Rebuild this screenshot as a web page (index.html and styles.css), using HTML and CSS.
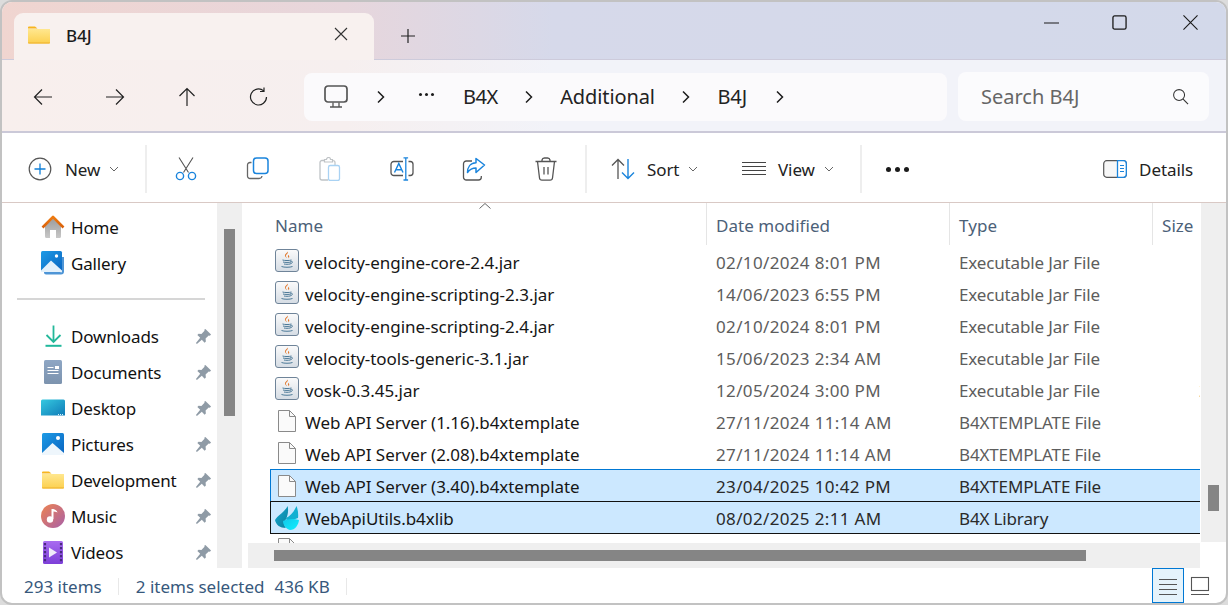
FILE: index.html
```html
<!DOCTYPE html>
<html lang="en">
<head>
<meta charset="utf-8">
<title>B4J</title>
<link rel="stylesheet" href="styles.css">
</head>
<body>
<svg class="defs" aria-hidden="true">
  <defs>
    <linearGradient id="gFolder" x1="0" y1="0" x2="0" y2="1"><stop offset="0" stop-color="#ffe78f"/><stop offset="1" stop-color="#fcd04f"/></linearGradient>
    <linearGradient id="gRoof" x1="0" y1="0" x2="0" y2="1"><stop offset="0" stop-color="#ee7a10"/><stop offset="1" stop-color="#d9600a"/></linearGradient>
    <linearGradient id="gHouse" x1="0" y1="0" x2="0" y2="1"><stop offset="0" stop-color="#9c9c9c"/><stop offset="1" stop-color="#c8c8c8"/></linearGradient>
    <linearGradient id="gBlue" x1="0" y1="0" x2="1" y2="1"><stop offset="0" stop-color="#1d9be6"/><stop offset="1" stop-color="#0a64c0"/></linearGradient>
    <linearGradient id="gDoc" x1="0" y1="0" x2="0" y2="1"><stop offset="0" stop-color="#8ea6c4"/><stop offset="1" stop-color="#7c93ae"/></linearGradient>
    <linearGradient id="gDesk" x1="0" y1="0" x2="1" y2="1"><stop offset="0" stop-color="#35c9e0"/><stop offset="1" stop-color="#0f7bb8"/></linearGradient>
    <linearGradient id="gMusic" x1="0" y1="0" x2="1" y2="1"><stop offset="0" stop-color="#ee8350"/><stop offset="1" stop-color="#a860a8"/></linearGradient>
    <linearGradient id="gVideo" x1="0" y1="0" x2="0" y2="1"><stop offset="0" stop-color="#a86cf0"/><stop offset="1" stop-color="#7d3fd8"/></linearGradient>
    <linearGradient id="gJava" x1="0" y1="0" x2="0" y2="1"><stop offset="0" stop-color="#fbfbfb"/><stop offset="1" stop-color="#d5dce4"/></linearGradient>
    <linearGradient id="gFlame" x1="0" y1="0" x2="1" y2="1"><stop offset="0" stop-color="#12c8ea"/><stop offset="1" stop-color="#0ff0ff"/></linearGradient>
    <linearGradient id="gTeal" x1="0" y1="0" x2="1" y2="1"><stop offset="0" stop-color="#16a9cf"/><stop offset="1" stop-color="#0a7f9e"/></linearGradient>

    <symbol id="i-folder" viewBox="0 0 24 24">
      <path d="M1 4.500A1 1 0 0 1 2 3.500h6l2.500 2H1z" fill="#f7b51e"/>
      <path d="M1 6h22v13.500a1 1 0 0 1-1 1H2a1 1 0 0 1-1-1z" fill="url(#gFolder)"/>
      <path d="M1 19.500h22v.200a.8.800 0 0 1-.8.800H1.800a.8.800 0 0 1-.8-.8z" fill="#eeb02a"/>
    </symbol>
    <symbol id="i-home" viewBox="0 0 24 24">
      <path d="M4 11 12 3.500 20 11v10.500a1.500 1.500 0 0 1-1.500 1.500H15v-8H9v8H5.500A1.500 1.500 0 0 1 4 21.500z" fill="url(#gHouse)"/>
      <path d="M1.500 12.500 12 2l10.500 10.500" fill="none" stroke="url(#gRoof)" stroke-width="2.600" stroke-linejoin="round"/>
    </symbol>
    <symbol id="i-gallery" viewBox="0 0 24 24">
      <path d="M3 8v13.500a2 2 0 0 0 2 2h15a3 3 0 0 0 3-3V6h-2v14.500a1 1 0 0 1-1 1z" fill="#4e95d6"/>
      <rect x="0" y="0" width="21" height="21" rx="1.500" fill="url(#gBlue)"/>
      <path d="M0 19.500 10 9.500l11 10V21H0z" fill="#e4f1fb"/>
      <circle cx="15.500" cy="5" r="1.700" fill="#fff"/>
    </symbol>
    <symbol id="i-down" viewBox="0 0 24 24">
      <path d="M12.500 1.500v16M5.500 11l7 7 7-7" fill="none" stroke="#24b89a" stroke-width="1.800"/>
      <path d="M4.500 21.800h16" stroke="#20b89c" stroke-width="2"/>
    </symbol>
    <symbol id="i-docs" viewBox="0 0 24 24">
      <rect x="3" y="0" width="18" height="24" rx="1.500" fill="url(#gDoc)"/>
      <path d="M6.500 7.500h6M6.500 10.500h11M6.500 13.500h11" stroke="#fff" stroke-width="1.200"/>
      <rect x="14" y="6" width="4" height="3" fill="#fff"/>
    </symbol>
    <symbol id="i-desk" viewBox="0 0 24 24">
      <path d="M0 5a1.500 1.500 0 0 1 1.500-1.500h21A1.500 1.500 0 0 1 24 5v14.500H0z" fill="url(#gDesk)"/>
      <path d="M17 18.500h1M19 18.500h1M21 18.500h1" stroke="#d8f4fa" stroke-width="1"/>
    </symbol>
    <symbol id="i-pics" viewBox="0 0 24 24">
      <rect x="1" y="1" width="22" height="22" rx="1.500" fill="url(#gBlue)"/>
      <path d="M1 21 11.500 11 23 21v2H1z" fill="#eef6fc"/>
      <circle cx="17" cy="6" r="2" fill="#fff"/>
    </symbol>
    <symbol id="i-music" viewBox="0 0 24 24">
      <circle cx="12" cy="12" r="12" fill="url(#gMusic)"/>
      <path d="M11.500 5v10" stroke="#fff" stroke-width="2"/>
      <path d="M11.500 5c2 .3 4.500 1 5 3.500-1.500-.8-3.500-1-5-1z" fill="#fff"/>
      <circle cx="9" cy="15.500" r="3.200" fill="#fff"/>
    </symbol>
    <symbol id="i-video" viewBox="0 0 24 24">
      <rect x="2" y="1" width="20" height="23" rx="1.500" fill="url(#gVideo)"/>
      <path d="M4 3v19M20 3v19" stroke="#4a2a80" stroke-width="2.200" stroke-dasharray="2.200 1.800"/>
      <path d="M8 7.500v10l8-5z" fill="#f0ecfa"/>
    </symbol>
    <symbol id="i-pin" viewBox="0 0 18 18">
      <path d="M11 1 17 7l-1.300 1.200-1.200-.3-3.300 3.300.3 3-1.300 1.300-3-3L2 17l-1-1 4.500-5.700-3-3 1.300-1.300 3 .3 3.300-3.300-.3-1.200z" fill="#8f9ba6"/>
    </symbol>
    <symbol id="i-java" viewBox="0 0 24 24">
      <rect x=".5" y=".5" width="23" height="22" rx="2.500" fill="url(#gJava)" stroke="#6f8499"/>
      <path d="M12.500 2.500c1.500 2-2.500 3-1.500 5 .3.700 1 1.200 1 1.800-1.200-1-2.700-2-1.800-3.700.6-1.200 2.300-1.800 2.300-3.100zM14.500 5.500c-1.500.8-2 1.500-1.300 2.500.4.600.2 1-.3 1.500 1.800-1 1.500-1.900 1-2.700-.2-.5 0-.9.600-1.300z" fill="#e0762a"/>
      <path d="M7.500 11c2 .7 7 .7 9 0M8 13c2 .6 6 .6 8 0M9 15c1.500.4 4.500.4 6 0M6.500 17.500c2.500 1 8.500 1 11 0M15.500 12.500c2.500-.8 2.800 1.500-.5 2.500" fill="none" stroke="#4d7a98" stroke-width="1"/>
    </symbol>
    <symbol id="i-file" viewBox="0 0 24 24">
      <path d="M3.500 1.500h11l6 6v15h-17z" fill="#fafafa" stroke="#8a8a8a"/>
      <path d="M14.500 1.500v6h6" fill="none" stroke="#8a8a8a"/>
    </symbol>
    <symbol id="i-b4x" viewBox="0 0 24 24">
      <path d="M11 12c4-2 8-6 10.500-12 1.500 4 2 8 1.500 12l-11 4z" fill="#12b0d2"/>
      <path d="M0 14C3 9 8 8 12.700 0c.8 5 .3 9-1.700 13-2 4-2 7 0 9C5 22 1 19 0 14z" fill="url(#gTeal)"/>
      <path d="M8 15c4-2 10-3 16-1-.5 5-4 10-9 10-4-1-7-5-7-9z" fill="url(#gFlame)"/>
    </symbol>
    <symbol id="i-chev" viewBox="0 0 10 16">
      <path d="M2 2.500 7.500 8 2 13.500" fill="none" stroke="#1c1c1c" stroke-width="1.500"/>
    </symbol>
    <symbol id="i-drop" viewBox="0 0 10 6">
      <path d="M1 1l4 4 4-4" fill="none" stroke="#666" stroke-width="1"/>
    </symbol>
  </defs>
</svg>

<div class="window">
  <header class="titlebar">
    <div class="tab">
      <svg class="tab-folder"><use href="#i-folder"/></svg>
      <span class="tab-title">B4J</span>
      <svg class="tab-close" viewBox="0 0 14 14"><path d="M1 1l12 12M13 1 1 13" stroke="#333" stroke-width="1.100" fill="none"/></svg>
    </div>
    <svg class="tab-add" viewBox="0 0 14 14"><path d="M7 0v14M0 7h14" stroke="#222" stroke-width="1.200" fill="none"/></svg>
    <div class="caption">
      <span class="cap-btn cap-min"><svg class="cap-ic" viewBox="0 0 16 16"><path d="M0 8.500h16" stroke="#1a1a1a" stroke-width="1.100"/></svg></span>
      <span class="cap-btn"><svg class="cap-ic" viewBox="0 0 16 16"><rect x="1" y="1" width="14" height="14" rx="1.800" fill="none" stroke="#1a1a1a" stroke-width="1.400"/></svg></span>
      <span class="cap-btn"><svg class="cap-ic" viewBox="0 0 16 16"><path d="M.5.500l15 15M15.500.500l-15 15" stroke="#1a1a1a" stroke-width="1.200" fill="none"/></svg></span>
    </div>
  </header>

  <nav class="addressbar">
    <span class="nav-btn"><svg class="nav-ic" viewBox="0 0 20 20"><path d="M19 10H1.500M9 2.500 1.500 10 9 17.500" fill="none" stroke="#222" stroke-width="1.200"/></svg></span>
    <span class="nav-btn"><svg class="nav-ic" viewBox="0 0 20 20"><path d="M1 10h17.500M11 2.500l7.500 7.500-7.500 7.500" fill="none" stroke="#222" stroke-width="1.200"/></svg></span>
    <span class="nav-btn"><svg class="nav-ic" viewBox="0 0 20 20"><path d="M10 19V1.500M2.500 9 10 1.500 17.500 9" fill="none" stroke="#222" stroke-width="1.200"/></svg></span>
    <span class="nav-btn"><svg class="nav-ic" viewBox="0 0 20 20"><path d="M17.500 10a8 8 0 1 1-2.800-6.100M15 .500v4h-4" fill="none" stroke="#222" stroke-width="1.200"/></svg></span>
    <div class="path">
      <span class="crumb-ic"><svg class="monitor" viewBox="0 0 24 24"><rect x="1" y="1" width="22" height="16" rx="3" fill="none" stroke="#555" stroke-width="1.700"/><path d="M9 17.500v4M15 17.500v4M6 22h12" stroke="#555" stroke-width="1.300" fill="none"/></svg></span>
      <svg class="chev chev-first"><use href="#i-chev"/></svg>
      <span class="dots"><i></i><i></i><i></i></span>
      <span class="crumb crumb-short">B4X</span>
      <svg class="chev"><use href="#i-chev"/></svg>
      <span class="crumb">Additional</span>
      <svg class="chev"><use href="#i-chev"/></svg>
      <span class="crumb">B4J</span>
      <svg class="chev chev-last"><use href="#i-chev"/></svg>
    </div>
    <div class="search">
      <span class="search-text">Search B4J</span>
      <svg class="search-ic" viewBox="0 0 18 18"><circle cx="7.500" cy="7.500" r="5.800" fill="none" stroke="#333" stroke-width="1.100"/><path d="M11.800 11.800 17 17" stroke="#333" stroke-width="1.200"/></svg>
    </div>
  </nav>

  <div class="toolbar">
    <div class="tb-new">
      <svg class="tb-ic" viewBox="0 0 24 24"><circle cx="12" cy="12" r="10.800" fill="none" stroke="#555" stroke-width="1.200"/><path d="M12 6.500v11M6.500 12h11" stroke="#0f7fd8" stroke-width="1.300"/></svg>
      <span class="tb-label">New</span>
      <svg class="drop"><use href="#i-drop"/></svg>
    </div>
    <span class="tb-sep sep-a"></span>
    <span class="tb-btn"><svg class="tb-ic" viewBox="0 0 24 24"><path d="M5 .5 14.500 15.500M19 .5 9.500 15.500" fill="none" stroke="#555" stroke-width="1.100"/><circle cx="6" cy="19" r="3.600" fill="none" stroke="#1a84dc" stroke-width="1.400"/><circle cx="18" cy="19" r="3.600" fill="none" stroke="#1a84dc" stroke-width="1.400"/></svg></span>
    <span class="tb-btn"><svg class="tb-ic" viewBox="0 0 24 24"><path d="M5.500 5.500H4A2.500 2.500 0 0 0 1.500 8v11A2.500 2.500 0 0 0 4 21.500h9a3 3 0 0 0 3-2.500" fill="none" stroke="#666" stroke-width="1.300"/><rect x="7.500" y="1" width="14.500" height="15.500" rx="3" fill="none" stroke="#1a84dc" stroke-width="1.500"/></svg></span>
    <span class="tb-btn"><svg class="tb-ic" viewBox="0 0 24 24"><path d="M6 3.500H4A2 2 0 0 0 2 5.500V21a2 2 0 0 0 2 2h6" fill="none" stroke="#bfc3c6" stroke-width="1.300"/><path d="M6.500 5V2.500h2a2 2 0 0 1 4 0h2V5zM14.500 3.500h.500a2 2 0 0 1 2 2V8" fill="none" stroke="#bfc3c6" stroke-width="1.200"/><rect x="10.500" y="8.500" width="11" height="15" rx="1.800" fill="none" stroke="#a9d2f3" stroke-width="1.300"/></svg></span>
    <span class="tb-btn"><svg class="tb-ic" viewBox="0 0 24 24"><path d="M18.500 4.500h1.800A2.800 2.800 0 0 1 23 7.300v8.400a2.800 2.800 0 0 1-2.700 2.800h-1.800M13 4.500H4A2.800 2.800 0 0 0 1 7.300v8.400a2.800 2.800 0 0 0 3 2.800h9" fill="none" stroke="#555" stroke-width="1.300"/><path d="M4.500 15.500 8.800 6.500l4.200 9M6 12.800h5.600" fill="none" stroke="#1a84dc" stroke-width="1.400"/><path d="M15.800.5v22.500M13.500.8h4.600M13.500 23h4.600" fill="none" stroke="#1a84dc" stroke-width="1.300"/></svg></span>
    <span class="tb-btn"><svg class="tb-ic" viewBox="0 0 24 24"><path d="M10 4H4.500A2.800 2.800 0 0 0 1.500 6.800v13.400A2.800 2.800 0 0 0 4.500 23h12a2.800 2.800 0 0 0 2.800-2.800V19" fill="none" stroke="#555" stroke-width="1.300"/><path d="M14 1.500v4.300C8 6 5.500 10.500 5.500 15.500 8 12 10.500 11 14 11v4.500L22.500 8z" fill="none" stroke="#1a84dc" stroke-width="1.500" stroke-linejoin="round"/></svg></span>
    <span class="tb-btn"><svg class="tb-ic" viewBox="0 0 24 24"><path d="M1.500 4.500h21M8 4.500V3a2.500 2.500 0 0 1 2.500-2h3A2.500 2.500 0 0 1 16 3v1.500M3.500 4.500 5.500 21a2.500 2.500 0 0 0 2.500 2.200h8a2.500 2.500 0 0 0 2.500-2.200l2-16.500M10 10v7.500M14 10v7.500" fill="none" stroke="#555" stroke-width="1.300"/></svg></span>
    <span class="tb-sep sep-b"></span>
    <div class="tb-group sort">
      <svg class="tb-ic" viewBox="0 0 24 24"><path d="M7 22V2.500M1 8.500l6-6 6 6" fill="none" stroke="#555" stroke-width="1.300"/><path d="M17 2v19.500M11 15.500l6 6 6-6" fill="none" stroke="#1a84dc" stroke-width="1.400"/></svg>
      <span class="tb-label">Sort</span>
      <svg class="drop"><use href="#i-drop"/></svg>
    </div>
    <div class="tb-group view">
      <svg class="tb-ic" viewBox="0 0 24 20"><path d="M0 3.500h24M0 7.500h24M0 11.500h24M0 15.500h24" stroke="#444" stroke-width="1.100"/></svg>
      <span class="tb-label">View</span>
      <svg class="drop"><use href="#i-drop"/></svg>
    </div>
    <span class="tb-sep sep-c"></span>
    <span class="more"><i></i><i></i><i></i></span>
    <div class="details">
      <svg class="det-ic" viewBox="0 0 24 18"><rect x=".7" y=".7" width="22.600" height="16.600" rx="3" fill="#f7f7f7" stroke="#555" stroke-width="1.200"/><path d="M14.500.7H20.300a3 3 0 0 1 3 3v10.600a3 3 0 0 1-3 3H14.500z" fill="#fff" stroke="#1a84dc" stroke-width="1.300"/><path d="M17 5.500h4M17 8.500h4M17 11.500h4" stroke="#1a84dc" stroke-width="1.100"/></svg>
      <span class="tb-label">Details</span>
    </div>
  </div>

  <div class="main">
    <aside class="sidebar">
      <ul class="tree">
        <li class="tree-row"><svg class="tree-ic"><use href="#i-home"/></svg><span>Home</span></li>
        <li class="tree-row"><svg class="tree-ic"><use href="#i-gallery"/></svg><span>Gallery</span></li>
        <li class="tree-div"></li>
        <li class="tree-row"><svg class="tree-ic"><use href="#i-down"/></svg><span>Downloads</span><svg class="pin"><use href="#i-pin"/></svg></li>
        <li class="tree-row"><svg class="tree-ic"><use href="#i-docs"/></svg><span>Documents</span><svg class="pin"><use href="#i-pin"/></svg></li>
        <li class="tree-row"><svg class="tree-ic"><use href="#i-desk"/></svg><span>Desktop</span><svg class="pin"><use href="#i-pin"/></svg></li>
        <li class="tree-row"><svg class="tree-ic"><use href="#i-pics"/></svg><span>Pictures</span><svg class="pin"><use href="#i-pin"/></svg></li>
        <li class="tree-row"><svg class="tree-ic"><use href="#i-folder"/></svg><span>Development</span><svg class="pin"><use href="#i-pin"/></svg></li>
        <li class="tree-row"><svg class="tree-ic"><use href="#i-music"/></svg><span>Music</span><svg class="pin"><use href="#i-pin"/></svg></li>
        <li class="tree-row"><svg class="tree-ic"><use href="#i-video"/></svg><span>Videos</span><svg class="pin"><use href="#i-pin"/></svg></li>
      </ul>
    </aside>
    <div class="vtrack side-track"><span class="vthumb side-thumb"></span></div>
    <section class="files">
      <div class="file-wrap">
        <div class="list">
          <div class="head">
            <svg class="sort-caret" viewBox="0 0 12 6"><path d="M.5 5.500 6 .5l5.500 5" fill="none" stroke="#666" stroke-width="1"/></svg>
            <span class="hcell">Name</span>
            <span class="hcell">Date modified</span>
            <span class="hcell">Type</span>
            <span class="hcell">Size</span>
          </div>
          <div class="rows">
            <div class="row"><span class="c-name"><svg class="file-ic"><use href="#i-java"/></svg><span class="fname">velocity-engine-core-2.4.jar</span></span><span class="c c-date">02/10/2024 8:01 PM</span><span class="c">Executable Jar File</span><span class="c c-size"></span></div>
            <div class="row"><span class="c-name"><svg class="file-ic"><use href="#i-java"/></svg><span class="fname">velocity-engine-scripting-2.3.jar</span></span><span class="c c-date">14/06/2023 6:55 PM</span><span class="c">Executable Jar File</span><span class="c c-size"></span></div>
            <div class="row"><span class="c-name"><svg class="file-ic"><use href="#i-java"/></svg><span class="fname">velocity-engine-scripting-2.4.jar</span></span><span class="c c-date">02/10/2024 8:01 PM</span><span class="c">Executable Jar File</span><span class="c c-size"></span></div>
            <div class="row"><span class="c-name"><svg class="file-ic"><use href="#i-java"/></svg><span class="fname">velocity-tools-generic-3.1.jar</span></span><span class="c c-date">15/06/2023 2:34 AM</span><span class="c">Executable Jar File</span><span class="c c-size"></span></div>
            <div class="row"><span class="c-name"><svg class="file-ic"><use href="#i-java"/></svg><span class="fname">vosk-0.3.45.jar</span></span><span class="c c-date">12/05/2024 3:00 PM</span><span class="c">Executable Jar File</span><span class="c c-size">2</span></div>
            <div class="row"><span class="c-name"><svg class="file-ic"><use href="#i-file"/></svg><span class="fname">Web API Server (1.16).b4xtemplate</span></span><span class="c c-date">27/11/2024 11:14 AM</span><span class="c">B4XTEMPLATE File</span><span class="c c-size"></span></div>
            <div class="row"><span class="c-name"><svg class="file-ic"><use href="#i-file"/></svg><span class="fname">Web API Server (2.08).b4xtemplate</span></span><span class="c c-date">27/11/2024 11:14 AM</span><span class="c">B4XTEMPLATE File</span><span class="c c-size"></span></div>
            <div class="row sel sel-a"><span class="c-name"><svg class="file-ic"><use href="#i-file"/></svg><span class="fname">Web API Server (3.40).b4xtemplate</span></span><span class="c c-date">23/04/2025 10:42 PM</span><span class="c">B4XTEMPLATE File</span><span class="c c-size"></span></div>
            <div class="row sel sel-b"><span class="c-name"><svg class="file-ic"><use href="#i-b4x"/></svg><span class="fname">WebApiUtils.b4xlib</span></span><span class="c c-date">08/02/2025 2:11 AM</span><span class="c">B4X Library</span><span class="c c-size"></span></div>
            <div class="row"><span class="c-name"><svg class="file-ic"><use href="#i-file"/></svg></span></div>
          </div>
        </div>
        <div class="vtrack file-track"><span class="vthumb file-thumb"></span></div>
      </div>
      <div class="htrack"><span class="hthumb"></span></div>
    </section>
  </div>

  <footer class="status">
    <span class="st-count">293 items</span>
    <span class="st-sep"></span>
    <span class="st-sel">2 items selected</span>
    <span class="st-size">436 KB</span>
    <span class="st-sep"></span>
    <span class="st-views">
      <span class="view-btn active"><svg class="view-ic" viewBox="0 0 20 20"><path d="M1 3.500h18M1 8.500h18M1 13.500h18M1 18.500h18" stroke="#555" stroke-width="1.100"/></svg></span>
      <span class="view-btn"><svg class="view-ic" viewBox="0 0 20 20"><rect x="1.500" y="1.500" width="17" height="13" fill="none" stroke="#555" stroke-width="1.100"/><path d="M1 18.500h18" stroke="#555" stroke-width="1.100"/></svg></span>
    </span>
  </footer>
</div>
</body>
</html>
```

FILE: styles.css
```css
* { box-sizing: border-box; }
html, body { margin: 0; padding: 0; }
body {
  width: 1228px;
  height: 605px;
  overflow: hidden;
  background: #dcdcdc;
  font-family: "Noto Sans", "Open Sans", sans-serif;
  color: #1b1b1b;
}
.defs { position: absolute; width: 0; height: 0; }
svg { display: block; flex: none; }

.window {
  width: 1228px;
  height: 605px;
  border: 2px solid #c2c2c2;
  border-radius: 12px;
  background: #fff;
  overflow: hidden;
  display: flex;
  flex-direction: column;
}

/* title bar */
.titlebar {
  height: 58px;
  flex: none;
  display: flex;
  align-items: flex-end;
  padding-left: 12px;
  background: linear-gradient(90deg, #f0d5d0 0%, #e7d6dc 28%, #d6d9ea 45%, #d3d9ea 100%);
  border-bottom: 1px solid #cdcbdb;
}
.tab {
  width: 360px;
  height: 47px;
  margin-bottom: -1px;
  background: #f8f1ef;
  border-radius: 9px 9px 0 0;
  display: flex;
  align-items: center;
  padding: 0 0 2px 13px;
}
.tab-folder { width: 24px; height: 24px; margin-top: -2px; }
.tab-title { margin-left: 15px; font-size: 17px; font-weight: 500; width: 268px; }
.tab-close { width: 14px; height: 14px; margin-top: -3px; }
.tab-add { width: 14px; height: 14px; margin: 0 0 16px 27px; }
.caption { margin-left: auto; display: flex; align-self: flex-start; padding-top: 13px; }
.cap-btn { width: 71px; height: 15px; display: flex; justify-content: center; }
.cap-min { padding-left: 6px; }
.cap-ic { width: 15px; height: 15px; }

/* address bar */
.addressbar {
  height: 73px;
  flex: none;
  display: flex;
  align-items: center;
  padding: 2px 0 0 5px;
  background: linear-gradient(90deg, #f8efed 0%, #f6efef 28%, #f2f3f9 45%, #f2f3f9 100%);
  border-bottom: 2px solid #cbc9d8;
}
.nav-btn { width: 72px; display: flex; justify-content: center; }
.nav-ic { width: 20px; height: 20px; }
.path {
  width: 643px;
  height: 48px;
  margin-left: 9px;
  border-radius: 8px;
  background: #fbfafc;
  display: flex;
  align-items: center;
}
.crumb-ic { width: 64px; display: flex; justify-content: center; }
.monitor { width: 24px; height: 24px; }
.chev { width: 10px; height: 16px; margin: 0 21.500px 0 21px; }
.chev-first { margin: 0 8px; }
.dots { width: 64px; display: flex; justify-content: center; gap: 3px; margin-bottom: 4px; }
.dots i { width: 3px; height: 3px; border-radius: 50%; background: #1b1b1b; }
.crumb { font-size: 20px; letter-spacing: -.1px; margin-left: 5px; color: #222; }
.crumb-short { letter-spacing: -.5px; }
.crumb + .chev { margin-left: 26px; }
.crumb + .chev-last { margin-left: 28px; }
.search {
  width: 251px;
  height: 49px;
  margin-left: 11px;
  border-radius: 8px;
  background: #fbfbfd;
  display: flex;
  align-items: center;
  padding: 0 20px 0 23px;
}
.search-text { font-size: 20px; color: #666; }
.search-ic { width: 17px; height: 17px; margin-left: auto; }

/* command bar */
.toolbar {
  height: 70px;
  flex: none;
  display: flex;
  align-items: center;
  padding-top: 3px;
  background: #fff;
  border-bottom: 1px solid #d9c9c5;
}
.tb-ic { width: 24px; height: 24px; }
.tb-label { font-size: 17px; letter-spacing: -.1px; color: #222; }
.tb-new { display: flex; align-items: center; padding-left: 26px; width: 143px; }
.tb-new .tb-label { margin-left: 13px; }
.drop { width: 10px; height: 6px; margin-left: 9px; }
.tb-sep { width: 2px; height: 48px; background: #eeeeee; }
.sep-a { margin-right: 3px; }
.tb-btn { width: 72px; display: flex; justify-content: center; }
.sep-b { margin: 0 12px 0 3px; }
.tb-group { display: flex; align-items: center; }
.sort { width: 143px; padding-left: 12px; }
.sort .tb-label { margin-left: 12px; }
.view { width: 118px; }
.view .tb-ic { height: 20px; }
.view .tb-label { margin-left: 12px; }
.more { display: flex; gap: 4px; margin-left: 24px; }
.more i { width: 5px; height: 5px; border-radius: 50%; background: #1b1b1b; }
.details { margin-left: auto; padding-right: 33px; display: flex; align-items: center; }
.det-ic { width: 24px; height: 18px; margin-right: 12px; }

/* main area */
.main { flex: 1; min-height: 0; display: flex; overflow: hidden; }
.sidebar { width: 215px; flex: none; overflow: hidden; }
.tree { list-style: none; margin: 0; padding: 6px 0 0; height: 100%; overflow: hidden; }
.tree-row {
  height: 36px;
  display: flex;
  align-items: center;
  padding-left: 39px;
  font-size: 17px;
  letter-spacing: -.15px;
  color: #111;
}
.tree-ic { width: 24px; height: 24px; margin-right: 6px; }
.pin { width: 17px; height: 17px; margin-left: auto; margin-right: 5px; }
.tree-div { height: 2px; margin: 17px 12px 18px 15px; background: #d6d6d6; }

.vtrack { width: 25px; background: #efefef; flex: none; display: flex; justify-content: center; }
.vthumb { width: 11px; background: #858585; display: block; }
.side-thumb { height: 187px; margin-top: 26px; }

.files { flex: 1; min-width: 0; margin-left: 6px; display: flex; flex-direction: column; }
.file-wrap { flex: 1; min-height: 0; display: flex; }
.list { flex: 1; min-width: 0; overflow: hidden; background: #fff; }
.file-track { height: 339px; margin-left: 1px; }
.file-thumb { height: 26px; margin-top: 282px; }

.head {
  position: relative;
  height: 42px;
  margin-left: 22px;
  display: grid;
  grid-template-columns: 437px 243px 203px 1fr;
}
.sort-caret { position: absolute; left: 209px; top: 0; width: 12px; height: 6px; }
.hcell {
  display: flex;
  align-items: center;
  padding: 3px 0 0 9px;
  font-size: 17px;
  letter-spacing: .05px;
  color: #4c6178;
  border-right: 1px solid #e5e5e5;
  overflow: hidden;
}
.hcell:first-of-type { padding-left: 5px; }
.hcell:last-child { border-right: 0; }

.rows { margin-left: 22px; }
.row {
  height: 32px;
  display: grid;
  grid-template-columns: 436px 243px 203px 1fr;
  align-items: center;
  font-size: 17px;
  letter-spacing: -.05px;
  white-space: nowrap;
  border-left: 1px solid transparent;
}
.c-name { display: flex; align-items: center; padding-left: 4px; color: #161616; }
.fname { padding-top: 2px; }
.file-ic { width: 24px; height: 24px; margin-right: 6px; }
.c { padding: 2px 0 0 9px; color: #5d5d5d; overflow: hidden; letter-spacing: -.15px; }
.c-date { letter-spacing: .35px; }
.c-size { padding-left: 46px; }
.sel { background: #cce8ff; }
.sel-a { border-top: 1px solid #0078d4; border-left-color: #0078d4; }
.sel-b { border-top: 1px solid #111; border-bottom: 1px solid #111; border-left-color: #111; height: 33px; margin-bottom: -1px; }
.sel .c { color: #2a2a2a; }

.htrack { height: 25px; flex: none; width: 952px; background: #efefef; padding: 7px 0 0 26px; }
.hthumb { display: block; width: 812px; height: 11px; background: #858585; }

/* status bar */
.status {
  height: 35px;
  flex: none;
  display: flex;
  align-items: center;
  padding: 1px 0 0 22px;
  font-size: 17px;
  color: #37587c;
}
.st-sep { width: 1px; height: 17px; background: #e8e8e8; margin: 0 16.500px; }
.st-size { margin-left: 10px; }
.st-views { margin: -1px 0 0 auto; display: flex; padding-right: 10px; align-self: flex-start; }
.view-btn { width: 32px; height: 35px; display: flex; align-items: center; justify-content: center; border: 1px solid transparent; }
.view-btn.active { background: #e5f3fb; border-color: #0078d4; }
.view-ic { width: 20px; height: 20px; }
```
